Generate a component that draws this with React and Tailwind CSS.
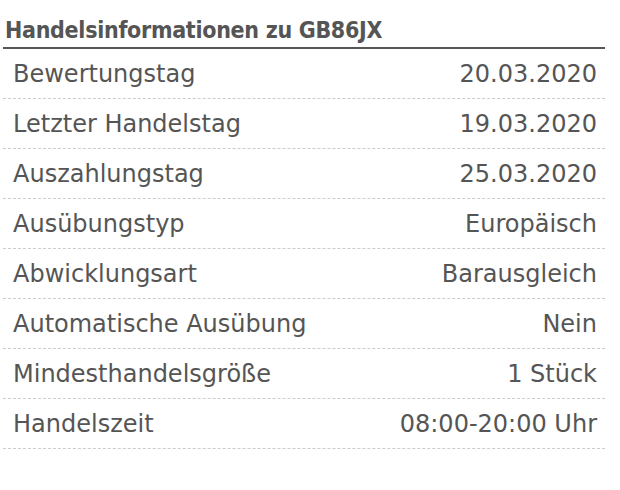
import React from "react";

const rows = [
  ["Bewertungstag", "20.03.2020"],
  ["Letzter Handelstag", "19.03.2020"],
  ["Auszahlungstag", "25.03.2020"],
  ["Ausübungstyp", "Europäisch"],
  ["Abwicklungsart", "Barausgleich"],
  ["Automatische Ausübung", "Nein"],
  ["Mindesthandelsgröße", "1 Stück"],
  ["Handelszeit", "08:00-20:00 Uhr"],
];

export default function App() {
  return (
    <div className="w-[620px] h-[490px] bg-white pt-[16px] pl-[3px]" style={{ fontFamily: '"DejaVu Sans", Verdana, sans-serif' }}>
      <div className="w-[602px]">
        <h2
          className="text-[23px] tracking-[-0.3px] font-bold text-[#555555] leading-[28px] pl-[2px] pb-[3px] border-b-2 border-[#555555]"
          style={{ fontFamily: '"DejaVu Sans Condensed", "DejaVu Sans", sans-serif' }}
        >
          Handelsinformationen zu GB86JX
        </h2>
        {rows.map(([k, v]) => (
          <div key={k} className="flex justify-between items-center h-[50px] pl-[10px] pr-[8px] border-b border-dashed border-[#cccccc] text-[24px] text-[#555555]">
            <span>{k}</span>
            <span>{v}</span>
          </div>
        ))}
      </div>
    </div>
  );
}
